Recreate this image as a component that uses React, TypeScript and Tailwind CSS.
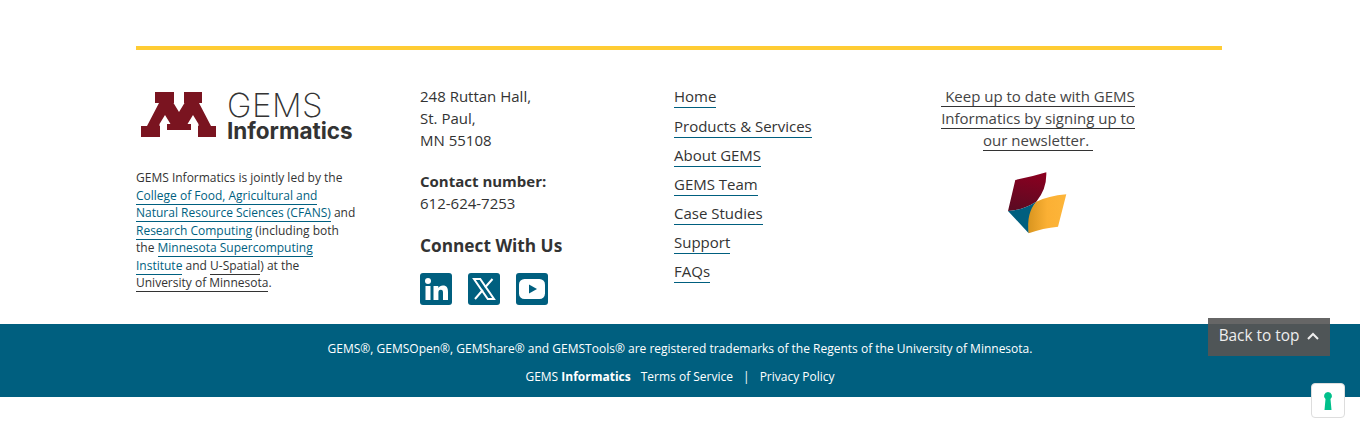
const sans = "font-['Open_Sans',sans-serif]";

function MLogo() {
  return (
    <svg width="82" height="48" viewBox="136 90 82 48" className="shrink-0">
      <path
        fill="#7a1420"
        d="M155 92H174V103H173.500L179 112L184.500 103H184V92H202V103H199L211 126H216V137H198V126H198.500V124L193 115L187.500 124H191V130H167V124H170.500L165 115L159.500 124V126H160V137H141V126H147L159 103H155Z"
      />
      <circle cx="219" cy="135" r="1" fill="#c88" />
    </svg>
  );
}

function BookMark() {
  return (
    <svg width="62" height="64" viewBox="0 0 62 64">
      <defs>
        <linearGradient id="red" x1="0.6" y1="0" x2="0.4" y2="1">
          <stop offset="0" stopColor="#8a0020" />
          <stop offset="1" stopColor="#5c0a22" />
        </linearGradient>
        <linearGradient id="gold" x1="0" y1="0" x2="1" y2="0">
          <stop offset="0" stopColor="#d9951f" />
          <stop offset="0.5" stopColor="#fbb034" />
          <stop offset="1" stopColor="#fdb53a" />
        </linearGradient>
      </defs>
      <path d="M1 40 L8.300 9 Q24 6 39.300 1.300 Q40 18 29.300 30.700 Q16 39 1 40Z" fill="url(#red)" />
      <path d="M1 40 Q16 39 29.300 30.700 Q22 40 21.700 62.300Z" fill="#005f7f" />
      <path d="M21.700 62.300 Q19 42 29.300 30.700 Q41 25 59.300 23.300 L51 55.700 Q36 57 21.700 62.300Z" fill="url(#gold)" />
    </svg>
  );
}

function Social({ children }: { children: React.ReactNode }) {
  return (
    <a className="flex h-8 w-8 items-center justify-center rounded-[3px] bg-[#005f7f]">
      {children}
    </a>
  );
}

const navLinks = ['Home', 'Products & Services', 'About GEMS', 'GEMS Team', 'Case Studies', 'Support', 'FAQs'];

export default function App() {
  return (
    <div className={`relative h-[431px] overflow-hidden bg-white text-[#333] ${sans}`}>
      <div className="mx-[136px] w-[1086px] pt-[46px]">
        <div className="h-[4px] bg-[#ffcc33]" />
        <div className="flex pt-[35px]">
          <div className="w-[284px]">
            <div className="flex h-[54px] items-start pt-[5px]">
              <MLogo />
              <div className="ml-[9px] flex flex-col">
                <span className="font-['Inter',sans-serif] text-[33px] leading-[31px] font-extralight tracking-[0.5px] text-[#333]">GEMS</span>
                <span className="font-['Inter',sans-serif] text-[22.500px] leading-[20px] font-bold text-[#333]">Informatics</span>
              </div>
            </div>
            <p className="mt-[30px] w-[220px] text-[12px] leading-[17.500px] text-[#333]">
              GEMS Informatics is jointly led by the{' '}
              <a className="border-b border-[#005f7f] text-[#005f7f]">College of Food, Agricultural and Natural Resource Sciences (CFANS)</a>{' '}
              and <a className="border-b border-[#005f7f] text-[#005f7f]">Research Computing</a> (including both the{' '}
              <a className="border-b border-[#005f7f] text-[#005f7f]">Minnesota Supercomputing Institute</a> and{' '}
              <a className="border-b border-[#333]">U-Spatial</a>) at the{' '}
              <a className="border-b border-[#333]">University of Minnesota</a>.
            </p>
          </div>

          <div className="w-[254px] text-[15px] leading-[22px]">
            <p>248 Ruttan Hall,<br />St. Paul,<br />MN 55108</p>
            <p className="mt-[19px] font-bold">Contact number:</p>
            <p>612-624-7253</p>
            <h3 className="mt-[20px] text-[17.250px] leading-[24px] font-bold">Connect With Us</h3>
            <div className="mt-[15px] flex gap-[16px]">
              <Social>
                <svg width="26" height="26" viewBox="0 0 26 26" fill="#fff">
                  <circle cx="5" cy="5" r="3" />
                  <rect x="2.500" y="10" width="5" height="14" />
                  <path d="M10.500 10h4.800v2c.8-1.400 2.500-2.400 4.600-2.400 4 0 5.100 2.600 5.100 6.300V24h-5v-7.200c0-1.700-.4-3-2.200-3s-2.400 1.300-2.400 3V24h-4.900z" />
                </svg>
              </Social>
              <Social>
                <svg width="24" height="24" viewBox="0 0 24 24" fill="none">
                  <path d="M2 2h6.200l13.800 20h-6.200z" stroke="#fff" strokeWidth="2" />
                  <path d="M20.500 2 13 10.500M10.800 13 3 22" stroke="#fff" strokeWidth="2" />
                </svg>
              </Social>
              <Social>
                <svg width="26" height="20" viewBox="0 0 26 20">
                  <rect x="0" y="0" width="26" height="20" rx="5.500" fill="#fff" />
                  <path d="M10 5.500 18 10 10 14.500z" fill="#005f7f" />
                </svg>
              </Social>
            </div>
          </div>

          <nav className="flex w-[267px] flex-col items-start gap-[6px] text-[15px] leading-[22px]">
            {navLinks.map((l, i) => (
              <a key={l} className={`border-b border-[#005f7f] leading-[22px] ${i === 0 ? 'mb-[1px]' : ''}`}>{l}</a>
            ))}
          </nav>

          <div className="w-[194px] text-center">
            <p className="text-[15px] leading-[22px] text-[#444]">
              <a className="border-b border-[#333]">&nbsp;Keep up to date with GEMS Informatics by signing up to our newsletter.&nbsp;</a>
            </p>
            <div className="mt-[20px] flex justify-center">
              <BookMark />
            </div>
          </div>
        </div>
      </div>

      <footer className="absolute inset-x-0 top-[324px] flex h-[73px] flex-col items-center bg-[#005f7f] pt-[16px] text-[12px] leading-[18px] text-white">
        <p>GEMS®, GEMSOpen®, GEMShare® and GEMSTools® are registered trademarks of the Regents of the University of Minnesota.</p>
        <p className="mt-[10px]">
          GEMS <b>Informatics</b>
          <a className="ml-[10px]">Terms of Service</a>
          <span className="mx-[10px]">|</span>
          <a>Privacy Policy</a>
        </p>
      </footer>

      <button className="absolute top-[318px] left-[1208px] flex h-[38px] w-[122px] items-center justify-center gap-[8px] border-t-[6px] border-[#666] bg-[#4f5557] pb-[9px] text-[15.360px] text-[#eee]">
        Back to top
        <svg width="12" height="8" viewBox="0 0 12 8" fill="none">
          <path d="M1 7 6 2l5 5" stroke="#eee" strokeWidth="2" />
        </svg>
      </button>

      <div className="absolute top-[383px] left-[1311px] flex h-[35px] w-[34px] items-center justify-center rounded-[4px] border border-[#ddd] bg-white">
        <svg width="10" height="20" viewBox="0 0 10 20">
          <path d="M5 1a4 4 0 0 1 2.500 7.100L8.500 19h-7L2.500 8.100A4 4 0 0 1 5 1z" fill="#00c08b" />
        </svg>
      </div>
    </div>
  );
}
